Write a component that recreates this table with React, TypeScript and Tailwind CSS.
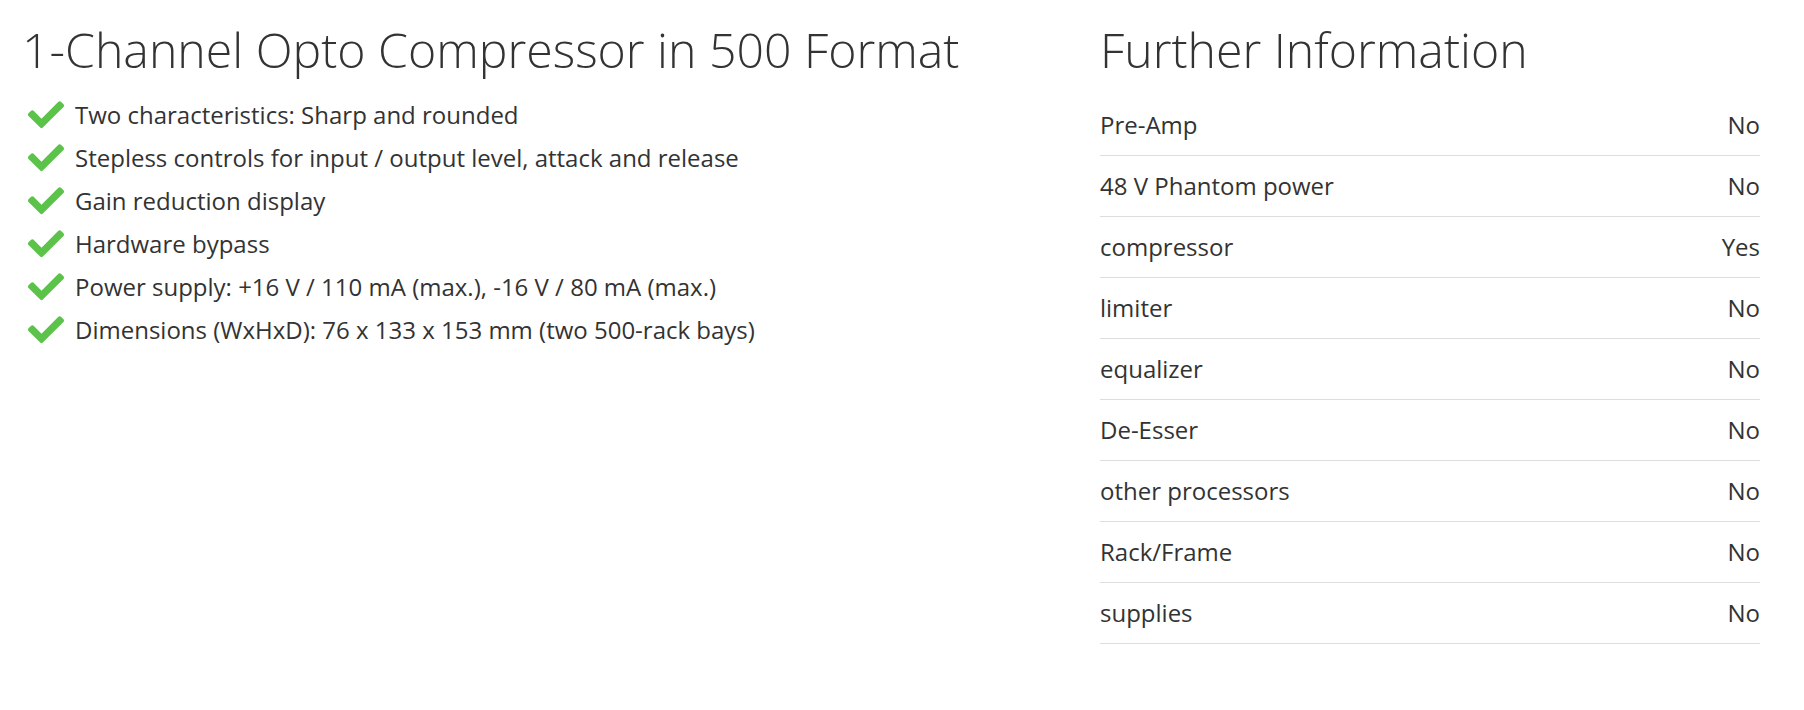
import React from "react";

const features = [
  "Two characteristics: Sharp and rounded",
  "Stepless controls for input / output level, attack and release",
  "Gain reduction display",
  "Hardware bypass",
  "Power supply: +16 V / 110 mA (max.), -16 V / 80 mA (max.)",
  "Dimensions (WxHxD): 76 x 133 x 153 mm (two 500-rack bays)",
];

const info: [string, string][] = [
  ["Pre-Amp", "No"],
  ["48 V Phantom power", "No"],
  ["compressor", "Yes"],
  ["limiter", "No"],
  ["equalizer", "No"],
  ["De-Esser", "No"],
  ["other processors", "No"],
  ["Rack/Frame", "No"],
  ["supplies", "No"],
];

function Check() {
  return (
    <svg viewBox="0 70 512 380" className="w-[36px] h-[28px] shrink-0" aria-hidden="true">
      <path
        fill="#5bc24a"
        d="M173.898 439.404l-166.4-166.4c-9.997-9.997-9.997-26.206 0-36.204l36.203-36.204c9.997-9.998 26.207-9.998 36.204 0L192 312.69 432.095 72.596c9.997-9.997 26.207-9.997 36.204 0l36.203 36.204c9.997 9.997 9.997 26.206 0 36.204l-294.4 294.401c-9.998 9.997-26.207 9.997-36.204-.001z"
      />
    </svg>
  );
}

export default function App() {
  return (
    <div className="w-[1804px] h-[710px] bg-white text-[#333333] font-['Open_Sans',sans-serif]">
      <div className="flex pl-[22px] pr-[44px] pt-[23px]">
        <div className="flex-1">
          <h1 className="text-[48.2px] font-light leading-[1.1] tracking-normal">
            1-Channel Opto Compressor in 500 Format
          </h1>
          <ul className="mt-[17px]">
            {features.map((f) => (
              <li key={f} className="flex items-center h-[43px] pl-[6px] gap-[11px] text-[24px]">
                <Check />
                <span>{f}</span>
              </li>
            ))}
          </ul>
        </div>
        <div className="w-[660px]">
          <h2 className="text-[48.2px] font-light leading-[1.1]">Further Information</h2>
          <div className="mt-[19px]">
            {info.map(([k, v]) => (
              <div
                key={k}
                className="flex justify-between items-center h-[61px] border-b border-[#dddddd] text-[24px]"
              >
                <span>{k}</span>
                <span>{v}</span>
              </div>
            ))}
          </div>
        </div>
      </div>
    </div>
  );
}
